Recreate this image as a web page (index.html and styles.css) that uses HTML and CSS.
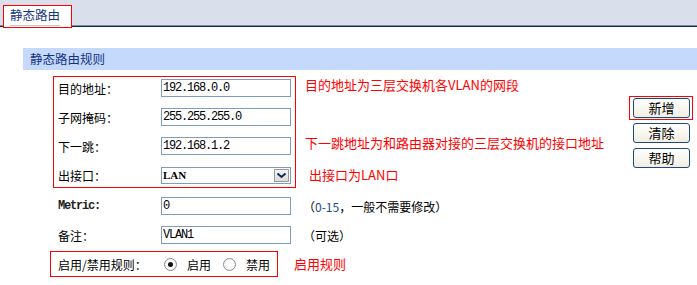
FILE: index.html
```html
<!DOCTYPE html>
<html lang="zh-CN">
<head>
  <meta charset="UTF-8">
  <title>静态路由</title>
  <link rel="stylesheet" href="styles.css">
</head>
<body>
  <div class="topbar">
    <div class="tab"><span class="tab-label">静态路由</span></div>
  </div>

  <div class="section-head">静态路由规则</div>

  <div class="rule-body">
    <div class="form-col">
      <div class="upper">
        <div class="hl-box group">
          <div class="row">
            <label class="lbl">目的地址：</label>
            <input class="txt" type="text" value="192.168.0.0">
          </div>
          <div class="row">
            <label class="lbl">子网掩码：</label>
            <input class="txt" type="text" value="255.255.255.0">
          </div>
          <div class="row">
            <label class="lbl">下一跳：</label>
            <input class="txt" type="text" value="192.168.1.2">
          </div>
          <div class="row">
            <label class="lbl">出接口：</label>
            <div class="sel">
              <span class="sel-val">LAN</span>
              <span class="sel-arrow">
                <svg width="11" height="7" viewBox="0 0 11 7"><path d="M1.5 1.5 L5.5 5 L9.5 1.5" fill="none" stroke="#0f2a55" stroke-width="2"/></svg>
              </span>
            </div>
          </div>
        </div>
        <div class="notes">
          <div class="note">目的地址为三层交换机各VLAN的网段</div>
          <div class="note"></div>
          <div class="note">下一跳地址为和路由器对接的三层交换机的接口地址</div>
          <div class="note note-last">出接口为LAN口</div>
        </div>
      </div>

      <div class="row plain">
        <label class="lbl mono">Metric:</label>
        <input class="txt" type="text" value="0">
        <span class="hint">（<span class="num">0-15</span>，一般不需要修改）</span>
      </div>
      <div class="row plain">
        <label class="lbl">备注：</label>
        <input class="txt" type="text" value="VLAN1">
        <span class="hint">（可选）</span>
      </div>

      <div class="enable-line">
        <div class="hl-box switch">
          <span class="lbl wide">启用/禁用规则：</span>
          <span class="radio on"></span><span class="radio-txt">启用</span>
          <span class="radio"></span><span class="radio-txt">禁用</span>
        </div>
        <span class="note small">启用规则</span>
      </div>
    </div>

    <div class="btn-col">
      <div class="hl-box btn-wrap"><button class="btn">新增</button></div>
      <button class="btn">清除</button>
      <button class="btn">帮助</button>
    </div>
  </div>
</body>
</html>
```

FILE: styles.css
```css
body {
  margin: 0;
  font-family: "Noto Sans CJK SC", "Noto Sans", sans-serif;
  font-size: 12px;
  color: #000;
  background: #fff;
  white-space: nowrap;
}

.topbar {
  height: 25px;
  background-color: #d9e0eb;
  border-bottom: 1px solid #7d92a6;
  box-shadow: 0 1px 0 #0f2a3e;
  display: flex;
  align-items: flex-end;
  padding-left: 3px;
}

.tab {
  position: relative;
  width: 61px;
  height: 21px;
  margin-bottom: -3px;
  background: #fff;
  border: 1px solid #ff0000;
  padding-left: 6px;
}

.tab-label {
  display: inline-block;
  width: 50px;
  height: 19px;
  line-height: 18px;
  font-size: 12.5px;
  color: #16347e;
  border-bottom: 1px solid #c4c4c4;
}

.section-head {
  margin: 22px 0 0 23px;
  height: 22px;
  line-height: 22px;
  padding-left: 7px;
  background-color: #c4d9fc;
  color: #16347e;
  font-size: 12.5px;
}

.rule-body {
  display: flex;
}

.form-col {
  padding-left: 50px;
  padding-top: 6px;
}

.upper {
  display: flex;
}

.hl-box {
  border: 1px solid #ff0000;
}

.group {
  margin-left: 3px;
  width: 235px;
  padding: 0 2px 1px 4px;
  display: flex;
  flex-direction: column;
  gap: 7px;
}

.row {
  height: 22px;
  display: flex;
  align-items: center;
}

.lbl {
  width: 103px;
  flex: none;
}

.lbl.mono {
  font-family: "Liberation Mono", monospace;
  font-weight: bold;
  font-size: 12px;
  letter-spacing: -1.2px;
  color: #222;
}

.txt {
  width: 130px;
  height: 18px;
  box-sizing: border-box;
  margin: 0;
  padding: 0 1px;
  border: 1px solid #7f9db9;
  font-family: "Liberation Mono", monospace;
  font-size: 12px;
  letter-spacing: -1.2px;
  color: #000;
  outline: none;
}

.sel {
  width: 130px;
  height: 17px;
  box-sizing: border-box;
  border: 1px solid #7f9db9;
  display: flex;
  align-items: center;
  justify-content: space-between;
  padding: 0 0 0 1px;
}

.sel-val {
  font-family: "Liberation Serif", serif;
  font-weight: bold;
  font-size: 11px;
}

.sel-arrow {
  width: 15px;
  height: 13px;
  margin-right: 1px;
  box-sizing: border-box;
  border: 1px solid #9a9a9a;
  background: linear-gradient(#f4f4f4, #dcdcdc);
  display: flex;
  align-items: center;
  justify-content: center;
}

.notes {
  margin-left: 9px;
  padding-top: 1px;
  display: flex;
  flex-direction: column;
  gap: 7px;
}

.note {
  height: 22px;
  color: #ff0000;
  font-size: 13px;
  line-height: 16px;
}

.note-last {
  padding-left: 4px;
  padding-top: 3px;
  height: 19px;
}

.plain {
  padding-left: 8px;
  margin-top: 7px;
}

.hint {
  margin-left: 12px;
}

.num {
  color: #1a4c8a;
}

.enable-line {
  display: flex;
  align-items: center;
  margin-top: 5px;
}

.switch {
  width: 219px;
  height: 24px;
  padding-left: 7px;
  display: flex;
  align-items: center;
}

.lbl.wide {
  width: 106px;
}

.radio {
  width: 11px;
  height: 11px;
  border: 1px solid #8c8c8c;
  border-radius: 50%;
  background: radial-gradient(circle, #ffffff 40%, #e6e6e6);
  position: relative;
  flex: none;
}

.radio.on::after {
  content: "";
  position: absolute;
  left: 3px;
  top: 3px;
  width: 5px;
  height: 5px;
  border-radius: 50%;
  background: #111;
}

.radio-txt {
  flex: none;
  margin: 0 12px 0 10px;
}

.note.small {
  height: auto;
  margin-left: 16px;
  font-size: 13px;
}

.btn-col {
  margin-left: auto;
  margin-right: 4px;
  margin-top: 26px;
  width: 64px;
  display: flex;
  flex-direction: column;
  align-items: flex-start;
}

.btn-wrap {
  padding: 1px 2px 1px 3px;
  margin-bottom: 3px;
}

.btn {
  width: 57px;
  height: 20px;
  margin: 0;
  padding: 0;
  border: 1px solid #1f4a78;
  border-radius: 3px;
  background: linear-gradient(#ffffff, #f0eee2);
  font-family: "Noto Sans CJK SC", sans-serif;
  font-size: 13px;
  line-height: 18px;
  color: #000;
  cursor: pointer;
}

.btn-col > .btn {
  margin-left: 4px;
  margin-bottom: 5px;
}
```
